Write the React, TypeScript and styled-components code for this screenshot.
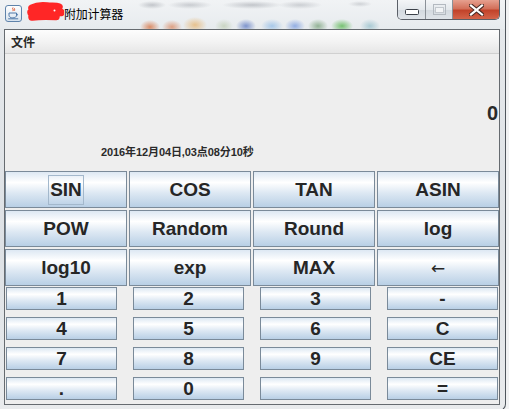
import React from "react";
import styled, { createGlobalStyle } from "styled-components";

const GlobalStyle = createGlobalStyle`
  html, body {
    margin: 0;
    padding: 0;
    background: #f3f4f5;
  }
  body {
    font-family: "Liberation Sans", Arial, sans-serif;
  }
`;

const funcKeys = [
  "SIN", "COS", "TAN", "ASIN",
  "POW", "Random", "Round", "log",
  "log10", "exp", "MAX", "←",
];

const numKeys = [
  "1", "2", "3", "-",
  "4", "5", "6", "C",
  "7", "8", "9", "CE",
  ".", "0", "", "=",
];

export default function App() {
  return (
    <>
      <GlobalStyle />
      <Screen>
        <Window>
          <TitleBar>
            <JavaIcon />
            <Redacted />
            <Title>附加计算器</Title>
            <Controls>
              <GlassButton>
                <MinimizeGlyph />
              </GlassButton>
              <GlassButton $last>
                <MaximizeGlyph />
              </GlassButton>
              <CloseButton>
                <CloseGlyph />
              </CloseButton>
            </Controls>
          </TitleBar>
          <Body>
            <Content>
              <MenuBar>
                <MenuItem>文件</MenuItem>
              </MenuBar>
              <Display>
                <Result>0</Result>
                <DateLabel>2016年12月04日,03点08分10秒</DateLabel>
              </Display>
              <FuncGrid>
                {funcKeys.map((k, i) => (
                  <Key key={k} $size="big">
                    <KeyLabel $focused={i === 0} $arrow={k === "←"}>
                      {k}
                    </KeyLabel>
                  </Key>
                ))}
              </FuncGrid>
              <NumGrid>
                {numKeys.map((k, i) => (
                  <Key key={i} $size="small">
                    <KeyLabel>{k}</KeyLabel>
                  </Key>
                ))}
              </NumGrid>
            </Content>
          </Body>
        </Window>
      </Screen>
    </>
  );
}

function JavaIcon() {
  return (
    <IconBox width="17" height="17" viewBox="0 0 17 17">
      <defs>
        <linearGradient id="jg" x1="0" y1="0" x2="0" y2="1">
          <stop offset="0" stopColor="#ffffff" />
          <stop offset="1" stopColor="#d6e2ee" />
        </linearGradient>
      </defs>
      <rect x="0.5" y="0.5" width="16" height="16" rx="2.5" fill="url(#jg)" stroke="#5f83aa" />
      <path d="M8 2.5c-1.5 1.3 1.4 2-0.2 3.6M9.6 3.2c-1 0.9 0.9 1.4-0.1 2.5" stroke="#e2552a" strokeWidth="1" fill="none" />
      <path d="M4 8h7.5v2.3c0 1.6-1.6 2.6-3.7 2.6S4 11.9 4 10.3z" fill="none" stroke="#4f78a8" strokeWidth="1" />
      <path d="M11.5 8.7c1.4 0 1.4 1.9 0 1.9" fill="none" stroke="#4f78a8" strokeWidth="0.9" />
      <path d="M3.2 13.8h10" stroke="#4f78a8" strokeWidth="1" />
    </IconBox>
  );
}

function Redacted() {
  return (
    <RedactBox width="37" height="21" viewBox="0 0 37 21">
      <path
        d="M5 6c4-2 10-2.5 15-2 5 0.5 9 0 12 1M4 10.5c6-1 14-1 21-0.5 4 0 7 0 9 0.5M5 15c7-1 15-1 24-0.5"
        stroke="#ff2626"
        strokeWidth="7.5"
        strokeLinecap="round"
        fill="none"
      />
      <circle cx="27.5" cy="8.5" r="1" fill="#ffffff" />
    </RedactBox>
  );
}

function MinimizeGlyph() {
  return (
    <svg width="14" height="6" viewBox="0 0 14 6">
      <rect x="0.5" y="0.5" width="13" height="5" rx="1" fill="#ffffff" stroke="#3b4048" />
    </svg>
  );
}

function MaximizeGlyph() {
  return (
    <svg width="13" height="11" viewBox="0 0 13 11">
      <rect x="0.5" y="0.5" width="12" height="10" fill="none" stroke="#b3b9c0" />
      <rect x="2.5" y="3.5" width="8" height="5" fill="#f2f4f6" stroke="#c3c8ce" />
    </svg>
  );
}

function CloseGlyph() {
  return (
    <svg width="15" height="12" viewBox="0 0 15 12">
      <path d="M2 1.5l11 9M13 1.5l-11 9" stroke="#4a2a24" strokeWidth="4.2" strokeLinecap="square" />
      <path d="M2 1.5l11 9M13 1.5l-11 9" stroke="#ffffff" strokeWidth="2.2" strokeLinecap="square" />
    </svg>
  );
}

const Screen = styled.div`
  width: 509px;
  height: 409px;
  overflow: hidden;
  background: #f1f2f3;
`;

const Window = styled.div`
  width: 506px;
  height: 411px;
  box-sizing: border-box;
  display: flex;
  flex-direction: column;
  border-right: 1px solid #50565d;
  border-bottom: 1px solid #50565d;
  border-bottom-right-radius: 7px;
  background: linear-gradient(to bottom, #e6e9ec 0%, #dde1e5 60%, #e9ebed 100%);
`;

const TitleBar = styled.div`
  height: 29px;
  flex: none;
  display: flex;
  align-items: flex-start;
  padding-left: 5px;
  background:
    radial-gradient(ellipse 10px 7px at 150px 27px, rgba(214, 110, 60, 0.75), transparent),
    radial-gradient(ellipse 10px 7px at 172px 27px, rgba(214, 110, 60, 0.6), transparent),
    radial-gradient(ellipse 12px 8px at 195px 25px, rgba(230, 175, 100, 0.7), transparent),
    radial-gradient(ellipse 9px 7px at 224px 26px, rgba(170, 190, 150, 0.5), transparent),
    radial-gradient(ellipse 10px 7px at 246px 26px, rgba(80, 110, 190, 0.7), transparent),
    radial-gradient(ellipse 11px 7px at 272px 26px, rgba(140, 185, 230, 0.7), transparent),
    radial-gradient(ellipse 10px 7px at 295px 26px, rgba(100, 140, 220, 0.65), transparent),
    radial-gradient(ellipse 10px 7px at 318px 26px, rgba(90, 140, 90, 0.6), transparent),
    radial-gradient(ellipse 11px 7px at 342px 26px, rgba(70, 175, 60, 0.7), transparent),
    radial-gradient(ellipse 10px 7px at 370px 26px, rgba(120, 175, 190, 0.55), transparent),
    radial-gradient(ellipse 14px 4px at 152px 5px, rgba(110, 115, 125, 0.35), transparent),
    radial-gradient(ellipse 22px 4px at 190px 5px, rgba(110, 115, 125, 0.3), transparent),
    radial-gradient(ellipse 30px 4px at 252px 5px, rgba(110, 115, 125, 0.35), transparent),
    radial-gradient(ellipse 22px 4px at 300px 5px, rgba(110, 115, 125, 0.28), transparent),
    radial-gradient(ellipse 12px 3px at 360px 4px, rgba(110, 115, 125, 0.25), transparent),
    linear-gradient(to bottom, #f1f3f5, #e7ebee);
`;

const IconBox = styled.svg`
  flex: none;
  margin-top: 5px;
`;

const RedactBox = styled.svg`
  flex: none;
  margin-top: 2px;
  margin-left: 5px;
`;

const Title = styled.div`
  margin-top: 6px;
  font-family: "Noto Sans CJK SC", "Liberation Sans", sans-serif;
  font-size: 12px;
  line-height: 16px;
  color: #000;
  letter-spacing: -0.2px;
`;

const Controls = styled.div`
  margin-left: auto;
  margin-right: 5px;
  display: flex;
  height: 20px;
  border: 1px solid #5b6068;
  border-top: none;
  border-radius: 0 0 5px 5px;
  overflow: hidden;
  box-sizing: border-box;
`;

const GlassButton = styled.div<{ $last?: boolean }>`
  width: ${(p) => (p.$last ? 27 : 28)}px;
  display: flex;
  align-items: center;
  justify-content: center;
  border-right: 1px solid #8b9198;
  background: linear-gradient(to bottom, #f3f5f7 0%, #e4e8ec 50%, #d3d9df 51%, #dfe4e9 100%);
  box-sizing: border-box;
  padding-top: ${(p) => (p.$last ? 0 : 5)}px;
`;

const CloseButton = styled.div`
  width: 46px;
  display: flex;
  align-items: center;
  justify-content: center;
  background: linear-gradient(to bottom, #e6a08f 0%, #d3705a 45%, #c2432a 55%, #d4644a 100%);
`;

const Body = styled.div`
  flex: 1;
  display: flex;
  padding: 0 5px 0 4px;
`;

const Content = styled.div`
  width: 496px;
  height: 376px;
  box-sizing: border-box;
  border: 1px solid #666b70;
  background: #eeeeee;
  display: flex;
  flex-direction: column;
`;

const MenuBar = styled.div`
  height: 24px;
  flex: none;
  box-sizing: border-box;
  display: flex;
  align-items: center;
  padding-left: 6px;
  border-bottom: 1px solid #d0d0d0;
  background: linear-gradient(to bottom, #fdfdfd 0%, #f3f3f3 50%, #e6e6e6 100%);
`;

const MenuItem = styled.span`
  font-family: "Noto Sans CJK SC", "Liberation Sans", sans-serif;
  font-size: 12px;
  font-weight: 700;
  color: #2a2a2a;
  line-height: 16px;
`;

const Display = styled.div`
  height: 117px;
  flex: none;
  display: grid;
  padding-right: 1px;
`;

const Result = styled.div`
  grid-area: 1 / 1;
  align-self: center;
  justify-self: end;
  font-size: 20px;
  font-weight: 700;
  color: #2a2a2a;
  line-height: 20px;
`;

const DateLabel = styled.div`
  grid-area: 1 / 1;
  align-self: end;
  justify-self: start;
  margin: 0 0 12px 96px;
  font-family: "Liberation Sans", "Noto Sans CJK SC", sans-serif;
  font-size: 11px;
  font-weight: 700;
  line-height: 13px;
  color: #2a2a2a;
  letter-spacing: -0.1px;
`;

const FuncGrid = styled.div`
  display: grid;
  grid-template-columns: repeat(4, 122px);
  grid-auto-rows: 37px;
  gap: 2px;
  height: 115px;
  flex: none;
`;

const NumGrid = styled.div`
  display: grid;
  grid-template-columns: repeat(4, 111px);
  grid-auto-rows: 23px;
  column-gap: 16px;
  row-gap: 7px;
  margin-top: 1px;
  padding-left: 1px;
`;

const Key = styled.button<{ $size: "big" | "small" }>`
  box-sizing: border-box;
  margin: 0;
  padding: 0;
  border: 1px solid #7a8a99;
  border-radius: 0;
  background: linear-gradient(
    to bottom,
    #dde8f3 0%,
    #ffffff 30%,
    #dde8f3 60%,
    #b8cfe5 100%
  );
  display: flex;
  align-items: center;
  justify-content: center;
  overflow: visible;
  font-family: "Liberation Sans", Arial, sans-serif;
  font-size: 19px;
  font-weight: 700;
  color: #262626;
  line-height: ${(p) => (p.$size === "big" ? 28 : 21)}px;
`;

const KeyLabel = styled.span<{ $focused?: boolean; $arrow?: boolean }>`
  display: block;
  padding: 0 1px;
  border: 1px solid ${(p) => (p.$focused ? "#a3b8cc" : "transparent")};
  font-family: ${(p) => (p.$arrow ? '"DejaVu Sans", sans-serif' : "inherit")};
  font-weight: ${(p) => (p.$arrow ? 400 : 700)};
  font-size: ${(p) => (p.$arrow ? "17px" : "inherit")};
  white-space: pre;
`;
